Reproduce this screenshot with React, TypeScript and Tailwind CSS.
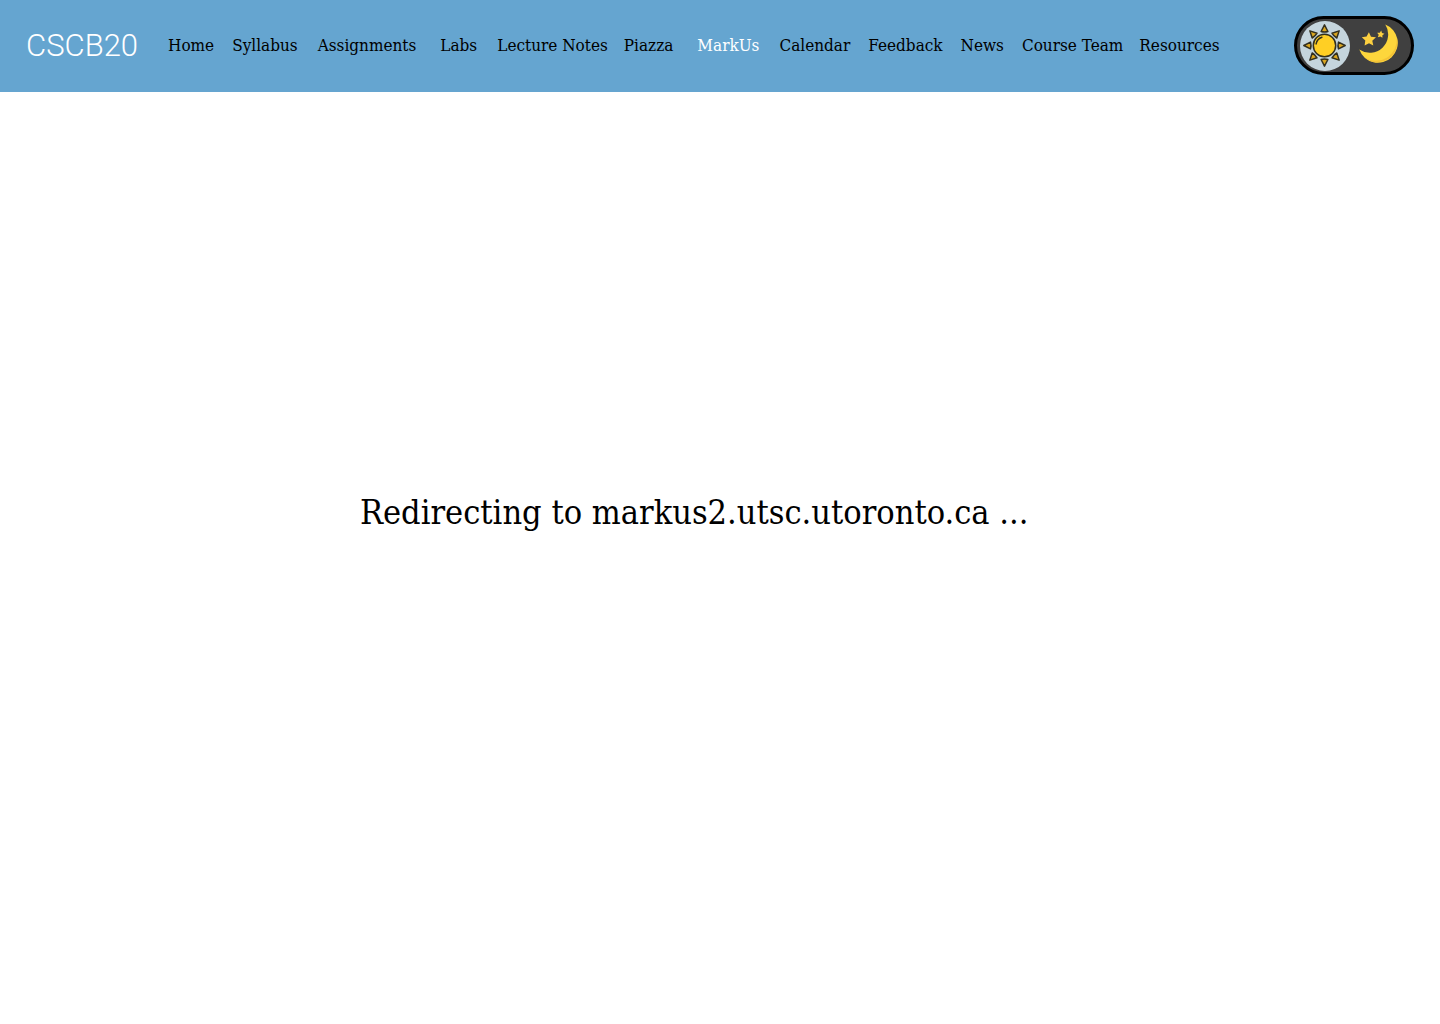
import { useState } from "react";

const links = [
  { label: "Home", gap: "ml-0" },
  { label: "Syllabus", gap: "ml-4.5" },
  { label: "Assignments", gap: "ml-5" },
  { label: "Labs", gap: "ml-6" },
  { label: "Lecture Notes", gap: "ml-5" },
  { label: "Piazza", gap: "ml-4" },
  { label: "MarkUs", gap: "ml-6" },
  { label: "Calendar", gap: "ml-5" },
  { label: "Feedback", gap: "ml-4.5" },
  { label: "News", gap: "ml-4.5" },
  { label: "Course Team", gap: "ml-4.5" },
  { label: "Resources", gap: "ml-4" },
];

const rayAngles = [0, 45, 90, 135, 180, 225, 270, 315];

function SunIcon() {
  return (
    <svg viewBox="0 0 50 50" className="size-[50px]" aria-hidden="true">
      <g stroke="#33301f" strokeWidth="1.5" strokeLinejoin="round" transform="translate(24.5 24.5)">
        {rayAngles.map((angle) => (
          <path key={angle} d="M0 -20.7 L3.4 -14 Q0 -13 -3.4 -14 Z" fill="#d9a520" transform={`rotate(${angle})`} />
        ))}
        <circle r="11.2" fill="#ffcf24" />
        <path d="M-8.4 -1.6 A8.6 8.6 0 0 1 -2.6 -8.2" fill="none" strokeLinecap="round" />
      </g>
    </svg>
  );
}

function MoonIcon() {
  return (
    <svg viewBox="0 0 42 42" className="size-[42px]" aria-hidden="true">
      <path d="M27.3 1.5 A19.8 19.8 0 1 1 1.3 26.5 A18.4 18.4 0 0 0 27.3 1.5 Z" fill="#fdd63c" />
      <path d="M38.5 14 A19.8 19.8 0 0 1 6 34 A20.8 20.8 0 0 0 38.5 14 Z" fill="#f4c236" />
      <path d="M10.9 9.2 L13 13.8 L18 14.3 L14.3 17.7 L15.3 22.4 L11 20.2 L6.6 22.5 L7.3 17.6 L3.8 14.2 L8.6 13.4 Z" fill="#fdd040" />
      <path d="M23.2 7.6 L24 10.1 L26.5 10.8 L24.4 12.3 L24.4 14.8 L22.4 13.4 L19.9 14.2 L20.7 11.7 L19.2 9.7 L21.8 9.7 Z" fill="#fdd040" />
    </svg>
  );
}

function ThemeSwitch() {
  const [dark, setDark] = useState(false);
  return (
    <button
      type="button"
      role="switch"
      aria-checked={dark}
      aria-label="Dark mode"
      onClick={() => setDark(!dark)}
      className="flex h-[59px] w-[120px] shrink-0 items-center gap-2 rounded-full border-3 border-black bg-[#404040] pl-[3px]"
    >
      <span className="size-[50px] rounded-full bg-[#c5d5dd]">
        <SunIcon />
      </span>
      <span className="pb-1">
        <MoonIcon />
      </span>
    </button>
  );
}

export default function App() {
  return (
    <div className="flex min-h-screen flex-col bg-white font-['DejaVu_Serif_Condensed','DejaVu_Serif',serif] text-black">
      <header className="flex items-center bg-[#65a5d0] px-[26px] pt-4 pb-[17px]">
        <a href="#home" className="font-['Roboto',sans-serif] text-[31px] leading-[59px] font-light text-white">
          CSCB20
        </a>
        <nav aria-label="Course" className="ml-[30px] flex grow items-center text-[17px] whitespace-nowrap">
          {links.map(({ label, gap }) => (
            <a
              key={label}
              href="#"
              aria-current={label === "MarkUs" ? "page" : undefined}
              className={`${gap} aria-[current=page]:text-white`}
            >
              {label}
            </a>
          ))}
        </nav>
        <ThemeSwitch />
      </header>
      <main className="flex grow items-center pb-[92px] pl-[25%]">
        <h1 className="text-[34px] leading-10">Redirecting to markus2.utsc.utoronto.ca ...</h1>
      </main>
    </div>
  );
}
